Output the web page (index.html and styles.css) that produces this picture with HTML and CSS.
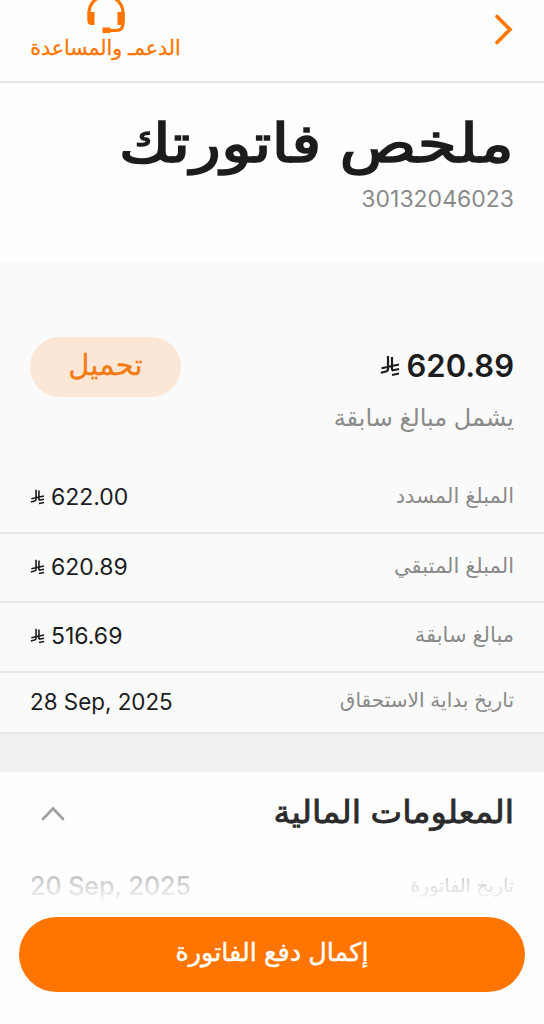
FILE: index.html
```html
<!DOCTYPE html>
<html lang="ar" dir="rtl">
<head>
    <meta charset="UTF-8">
    <meta name="viewport" content="width=device-width, initial-scale=1.0">
    <title>ملخص فاتورتك</title>
    <link rel="stylesheet" href="styles.css">
</head>
<body>
    <!-- Riyal sign, reused next to every amount -->
    <svg class="symbols" width="0" height="0">
        <symbol id="riyal" viewBox="0 0 20 22">
            <path d="M8 1V14Q8 16 6 16.500L0.8 17.800M12 2V15.500M1.500 13.300L19 9.500M12 15.500L19 14M12 20L19 18.500" fill="none" stroke="currentColor" stroke-width="2.200"/>
        </symbol>
    </svg>

    <header class="header">
        <button class="back">
            <svg width="18" height="32" viewBox="0 0 18 32"><path d="M2 2.500L15 15.500L2 28.500" fill="none" stroke="currentColor" stroke-width="3.6" stroke-linecap="round"/></svg>
        </button>
        <a class="support">
            <svg width="40" height="46" viewBox="0 0 40 46">
                <path d="M3 27V26A17 17 0 0 1 37 26V36Q37 43.500 30 43.500H17" fill="none" stroke="currentColor" stroke-width="3.200"/>
                <path d="M1.300 25H8.500V38H5.500Q1.300 38 1.300 33ZM38.700 25H31.500V38H34.500Q38.700 38 38.700 33ZM16.500 40.500H24.500V46H16.500Z" fill="currentColor"/>
            </svg>
            <span>الدعمـ والمساعدة</span>
        </a>
    </header>

    <section class="hero">
        <h1>ملخص فاتورتك</h1>
        <p class="account">30132046023</p>
    </section>

    <section class="summary">
        <div class="total">
            <div class="total-text">
                <div class="total-amount" dir="ltr"><svg class="riyal"><use href="#riyal"/></svg><span>620.89</span></div>
                <p class="note">يشمل مبالغ سابقة</p>
            </div>
            <button class="download"><span>تحميل</span></button>
        </div>

        <div class="row">
            <span class="label">المبلغ المسدد</span>
            <span class="value" dir="ltr"><svg class="riyal"><use href="#riyal"/></svg>622.00</span>
        </div>
        <div class="row row-middle">
            <span class="label">المبلغ المتبقي</span>
            <span class="value" dir="ltr"><svg class="riyal"><use href="#riyal"/></svg>620.89</span>
        </div>
        <div class="row">
            <span class="label">مبالغ سابقة</span>
            <span class="value" dir="ltr"><svg class="riyal"><use href="#riyal"/></svg>516.69</span>
        </div>
        <div class="row row-date">
            <span class="label">تاريخ بداية الاستحقاق</span>
            <span class="value" dir="ltr">28 Sep, 2025</span>
        </div>
    </section>

    <section class="details">
        <div class="details-head">
            <h2>المعلومات المالية</h2>
            <svg width="26" height="16" viewBox="0 0 26 16"><path d="M3 14L13 3.500L23 14" fill="none" stroke="currentColor" stroke-width="2.700" stroke-linecap="round"/></svg>
        </div>
        <div class="details-row">
            <span class="label">تاريخ الفاتورة</span>
            <span class="value" dir="ltr">20 Sep, 2025</span>
        </div>
    </section>

    <footer class="pay-bar">
        <button class="pay"><span>إكمال دفع الفاتورة</span></button>
    </footer>
</body>
</html>
```

FILE: styles.css
```css
* {
    box-sizing: border-box;
}

body {
    margin: 0;
    height: 1024px;
    overflow: hidden;
    position: relative;
    background: #fefefe;
    color: #1c1c1e;
    font-family: Inter, "DejaVu Sans", sans-serif;
}

h1, h2, p {
    margin: 0;
}

button {
    border: 0;
    padding: 0;
    background: none;
    font-family: inherit;
}

.symbols {
    display: block;
}

.header {
    display: flex;
    justify-content: space-between;
    height: 83px;
    padding: 0 31px 0 30px;
    border-bottom: 2px solid #e6e6e6;
    color: #ff7500;
}

.back {
    color: inherit;
    height: 32px;
    margin-top: 14px;
}

.support {
    display: flex;
    flex-direction: column;
    align-items: center;
    width: 151px;
    margin-top: -13px;
    font-size: 20.5px;
    line-height: 30px;
    white-space: nowrap;
    -webkit-text-stroke: 0.3px currentColor;
}

.support svg {
    flex: none;
}

.hero {
    height: 179px;
    padding: 35px 30px 0;
}

/* headings are drawn a little wider than the font */
h1 {
    width: fit-content;
    height: 66px;
    font-size: 54px;
    font-weight: 400;
    line-height: 50px;
    white-space: nowrap;
    transform: scaleX(1.18);
    transform-origin: right;
    -webkit-text-stroke: 1.6px currentColor;
}

.account {
    font-size: 23px;
    line-height: 30px;
    color: #8a8a8a;
}

.summary {
    background: #fafafa;
    padding-top: 75px;
    height: 472px;
}

.total {
    display: flex;
    justify-content: space-between;
    height: 127px;
    padding: 0 30px;
}

.total-amount {
    display: flex;
    align-items: center;
    gap: 7px;
    justify-content: flex-end;
    height: 57px;
    font-size: 31px;
    font-weight: 570;
}

.total-amount .riyal {
    width: 20px;
    height: 22px;
}

.note {
    font-size: 24px;
    line-height: 48px;
    color: #8a8a8a;
}

.download {
    width: 151px;
    height: 60px;
    padding-bottom: 5px;
    border-radius: 30px;
    background: #fce6d5;
    color: #f47a14;
    font-size: 29px;
    -webkit-text-stroke: 0.3px currentColor;
}

.row {
    display: flex;
    justify-content: space-between;
    align-items: center;
    height: 70px;
    padding: 0 30px 3px;
    border-bottom: 2px solid #e8e8e8;
}

.row-middle {
    height: 69px;
    padding-bottom: 2px;
}

.row-date {
    height: 61px;
}

.label {
    margin-top: -2px;
    font-size: 21px;
    color: #8a8a8a;
    white-space: nowrap;
}

.row-date .label {
    font-size: 20.1px;
}

.value {
    display: flex;
    align-items: center;
    gap: 6px;
    font-size: 23px;
}

.row-date .value {
    font-size: 22.4px;
}

.value .riyal {
    width: 15px;
    height: 16px;
}

.details {
    border-top: 38px solid #f0f0f0;
    padding: 0 30px;
}

.details-head {
    display: flex;
    justify-content: space-between;
    align-items: center;
    height: 82px;
    padding-left: 10px;
    color: #a0a0a0;
}

h2 {
    margin-top: -4px;
    font-size: 31px;
    font-weight: 400;
    color: #2b2b2d;
    transform: scaleX(1.083);
    transform-origin: right;
    -webkit-text-stroke: 0.8px currentColor;
}

.details-row {
    display: flex;
    justify-content: space-between;
    align-items: center;
    height: 64px;
}

.details-row .label {
    font-size: 19px;
}

.details-row .value {
    font-size: 25px;
    font-weight: 500;
    color: #777;
}

/* sticks over the list and fades it out */
.pay-bar {
    position: absolute;
    left: 0;
    right: 0;
    bottom: 0;
    height: 164px;
    padding: 57px 19px 0;
    background: linear-gradient(rgba(254, 254, 254, 0.3), #fefefe 44px);
}

.pay {
    width: 100%;
    height: 75px;
    padding-bottom: 6px;
    border-radius: 38px;
    background: #ff7500;
    color: #fff;
    font-size: 25.500px;
    -webkit-text-stroke: 0.4px currentColor;
}
```
